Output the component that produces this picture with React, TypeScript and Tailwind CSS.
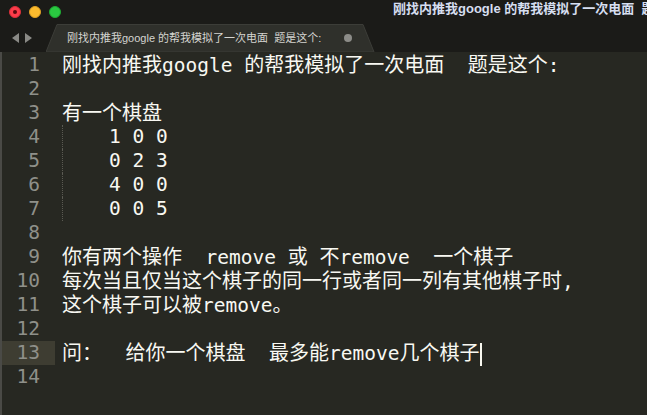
import React from "react";

const lines: string[] = [
  "刚找内推我google 的帮我模拟了一次电面  题是这个:",
  "",
  "有一个棋盘",
  "    1 0 0",
  "    0 2 3",
  "    4 0 0",
  "    0 0 5",
  "",
  "你有两个操作  remove 或 不remove  一个棋子",
  "每次当且仅当这个棋子的同一行或者同一列有其他棋子时,",
  "这个棋子可以被remove。",
  "",
  "问：  给你一个棋盘  最多能remove几个棋子",
  "",
];

const mono = { fontFamily: '"DejaVu Sans Mono", "Noto Sans CJK SC", monospace' };
const sans = { fontFamily: '"Liberation Sans", "Noto Sans CJK SC", sans-serif' };

function Runs({ text }: { text: string }) {
  const parts = text.split(/([\u3000-\u9fff\uff00-\uffef]+)/).filter((p) => p.length > 0);
  return (
    <>
      {parts.map((p, i) =>
        /[\u3000-\u9fff\uff00-\uffef]/.test(p) ? (
          <span key={i} className="text-[20px]">
            {p}
          </span>
        ) : (
          <span key={i} className="text-[19.5px]">
            {p}
          </span>
        )
      )}
    </>
  );
}

export default function App() {
  return (
    <div className="w-[647px] h-[415px] overflow-hidden bg-[#272822] flex flex-col relative">
      {/* title bar */}
      <div className="h-[24px] bg-[#1b1b18] flex items-center relative shrink-0">
        <div className="flex items-center gap-[8px] pl-[9px]">
          <div className="w-[12px] h-[12px] rounded-full bg-[#fc3c4a] border border-[#d92f3b] flex items-center justify-center">
            <div className="w-[4px] h-[4px] rounded-full bg-[#5a0a10]" />
          </div>
          <div className="w-[12px] h-[12px] rounded-full bg-[#fdbc2e] border border-[#dfa023]" />
          <div className="w-[12px] h-[12px] rounded-full bg-[#2ac841] border border-[#1eaa33]" />
        </div>
        <div
          className="absolute left-[393px] top-[1px] whitespace-nowrap text-[13px] leading-[16px] font-bold text-[#d6def0]"
          style={sans}
        >
          刚找内推我google 的帮我模拟了一次电面&nbsp;&nbsp;题是这个:
        </div>
      </div>
      {/* tab bar */}
      <div className="h-[28px] bg-[#1b1b18] relative shrink-0">
        <div className="absolute left-[12px] top-[9px] flex items-center gap-[6px]">
          <svg width="7" height="10" viewBox="0 0 7 10">
            <polygon points="7,0 7,10 0,5" fill="#8a8a86" />
          </svg>
          <svg width="7" height="10" viewBox="0 0 7 10">
            <polygon points="0,0 0,10 7,5" fill="#8a8a86" />
          </svg>
        </div>
        <svg className="absolute left-[46px] top-0" width="330" height="28" viewBox="0 0 330 28">
          <path d="M0,28 L11,0.5 L317,0.5 L328,28 Z" fill="#2f302b" stroke="#3c3d38" strokeWidth="1" />
        </svg>
        <div
          className="absolute left-[67px] top-[6px] whitespace-nowrap text-[11px] leading-[16px] text-[#d4d4d0]"
          style={sans}
        >
          刚找内推我google 的帮我模拟了一次电面&nbsp;&nbsp;题是这个:
        </div>
        <div className="absolute left-[344px] top-[10px] w-[8px] h-[8px] rounded-full bg-[#8c8c88]" />
      </div>
      {/* editor */}
      <div className="flex-1 flex pt-[1px] border-l-[2px] border-[#4a4a46]" style={mono}>
        <div className="w-[53px] flex flex-col">
          {lines.map((_, i) => (
            <div
              key={i}
              className={
                "h-[24px] leading-[24px] text-[19.5px] text-right pr-[15px] text-[#8f908a] " +
                (i === 12 ? "bg-[#3e3d32]" : "")
              }
            >
              {i + 1}
            </div>
          ))}
        </div>
        <div className="flex-1 flex flex-col pl-[7px] relative">
          {lines.map((t, i) => (
            <div
              key={i}
              className="h-[24px] leading-[24px] text-[19.5px] text-[#f8f8f2] whitespace-pre relative"
            >
              {i >= 3 && i <= 6 ? (
                <div className="absolute left-0 top-0 h-[24px] border-l border-dotted border-[#5a5a52]" />
              ) : null}
              <Runs text={t} />
              {i === 12 ? (
                <span className="inline-block w-[2px] h-[23px] bg-[#f8f8f0] align-middle ml-[1px]" />
              ) : null}
            </div>
          ))}
        </div>
      </div>
    </div>
  );
}
